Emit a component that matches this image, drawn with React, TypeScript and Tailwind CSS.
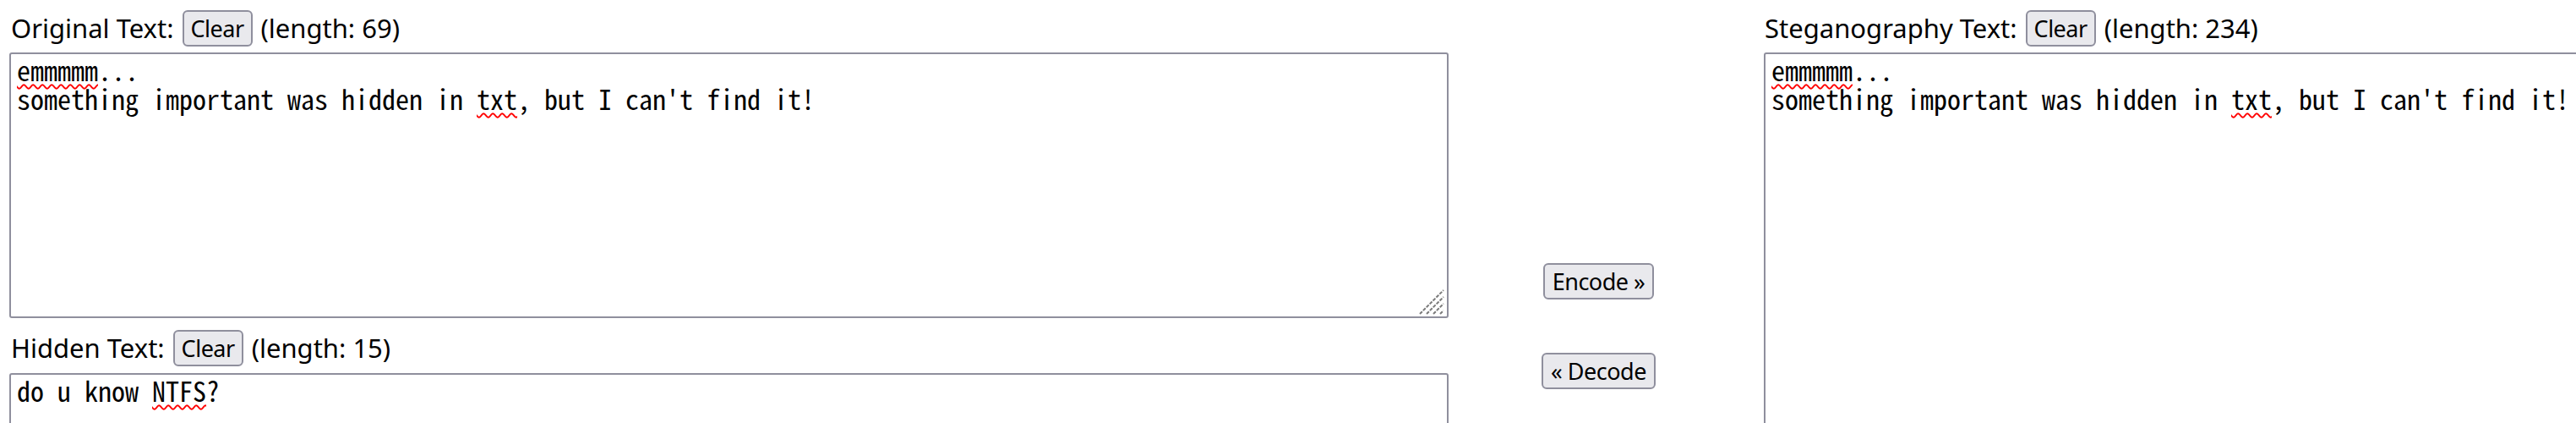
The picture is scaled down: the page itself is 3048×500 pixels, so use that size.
import React from "react";

function ClearButton() {
  return (
    <button className="w-[83px] h-[43px] rounded-[6px] border-2 border-[#8f8f9d] bg-[#e9e9ed] text-[27px] leading-none text-black font-['Noto_Sans',sans-serif] tracking-[-0.5px]">
      Clear
    </button>
  );
}

function FieldLabel({ label, length }: { label: string; length: number }) {
  return (
    <div className="flex items-center gap-[10px] h-[43px] text-[31px] leading-none text-black font-['Noto_Sans',sans-serif]">
      <span>{label}</span>
      <ClearButton />
      <span>(length: {length})</span>
    </div>
  );
}

function Squiggle({ children }: { children: React.ReactNode }) {
  return (
    <span className="underline decoration-wavy decoration-[#ff0000] decoration-[1.5px] underline-offset-[3px]">
      {children}
    </span>
  );
}

function Grip() {
  return (
    <svg className="absolute right-[3px] bottom-[2px]" width="30" height="30" viewBox="0 0 30 30">
      <g stroke="#7a7a7a" strokeWidth="2" strokeDasharray="4 1.5">
        <line x1="1" y1="29" x2="29" y2="1" />
        <line x1="9" y1="29" x2="29" y2="9" />
        <line x1="17" y1="29" x2="29" y2="17" />
        <line x1="25" y1="29" x2="29" y2="25" />
      </g>
    </svg>
  );
}

function TextBox({ children, className, grip }: { children: React.ReactNode; className: string; grip?: boolean }) {
  return (
    <div
      role="textbox"
      className={`relative border-2 border-[#8f8f9d] rounded-[3px] bg-white pl-[7px] pt-[1px] whitespace-pre-wrap text-[32px] leading-[34px] text-black font-['Noto_Sans_Mono_CJK_JP','Noto_Sans_CJK_JP',monospace] [font-feature-settings:'hwid'] ${className}`}
    >
      {children}
      {grip && <Grip />}
    </div>
  );
}

function StegoLines() {
  return (
    <>
      <Squiggle>emmmmm</Squiggle>
      {"...\n"}
      {"something important was hidden in "}
      <Squiggle>txt</Squiggle>
      {", but I can't find it!"}
    </>
  );
}

export default function App() {
  return (
    <div className="w-[3048px] h-[500px] overflow-hidden bg-white flex items-start">
      {/* Left column */}
      <div className="ml-[11px] w-[1703px] shrink-0 flex flex-col">
        <div className="mt-[12px] pl-[2px]">
          <FieldLabel label="Original Text:" length={69} />
        </div>
        <TextBox className="mt-[7px] h-[314px]" grip>
          <StegoLines />
        </TextBox>
        <div className="mt-[14px] pl-[2px]">
          <FieldLabel label="Hidden Text:" length={15} />
        </div>
        <TextBox className="mt-[8px] h-[300px]">
          {"do u know "}
          <Squiggle>NTFS</Squiggle>
          {"?"}
        </TextBox>
      </div>

      {/* Middle buttons */}
      <div className="w-[373px] shrink-0 pr-[18px] pt-[311px] flex flex-col items-center gap-[63px] font-['Noto_Sans',sans-serif]">
        <button className="w-[131px] h-[43px] rounded-[6px] border-2 border-[#8f8f9d] bg-[#e9e9ed] text-[27px] leading-none text-black tracking-[-0.5px]">
          Encode »
        </button>
        <button className="w-[135px] h-[43px] rounded-[6px] border-2 border-[#8f8f9d] bg-[#e9e9ed] text-[27px] leading-none text-black tracking-[-0.5px]">
          « Decode
        </button>
      </div>

      {/* Right column */}
      <div className="w-[1703px] shrink-0 flex flex-col">
        <div className="mt-[12px] pl-[1px]">
          <FieldLabel label="Steganography Text:" length={234} />
        </div>
        <TextBox className="mt-[7px] h-[600px]">
          <StegoLines />
        </TextBox>
      </div>
    </div>
  );
}
